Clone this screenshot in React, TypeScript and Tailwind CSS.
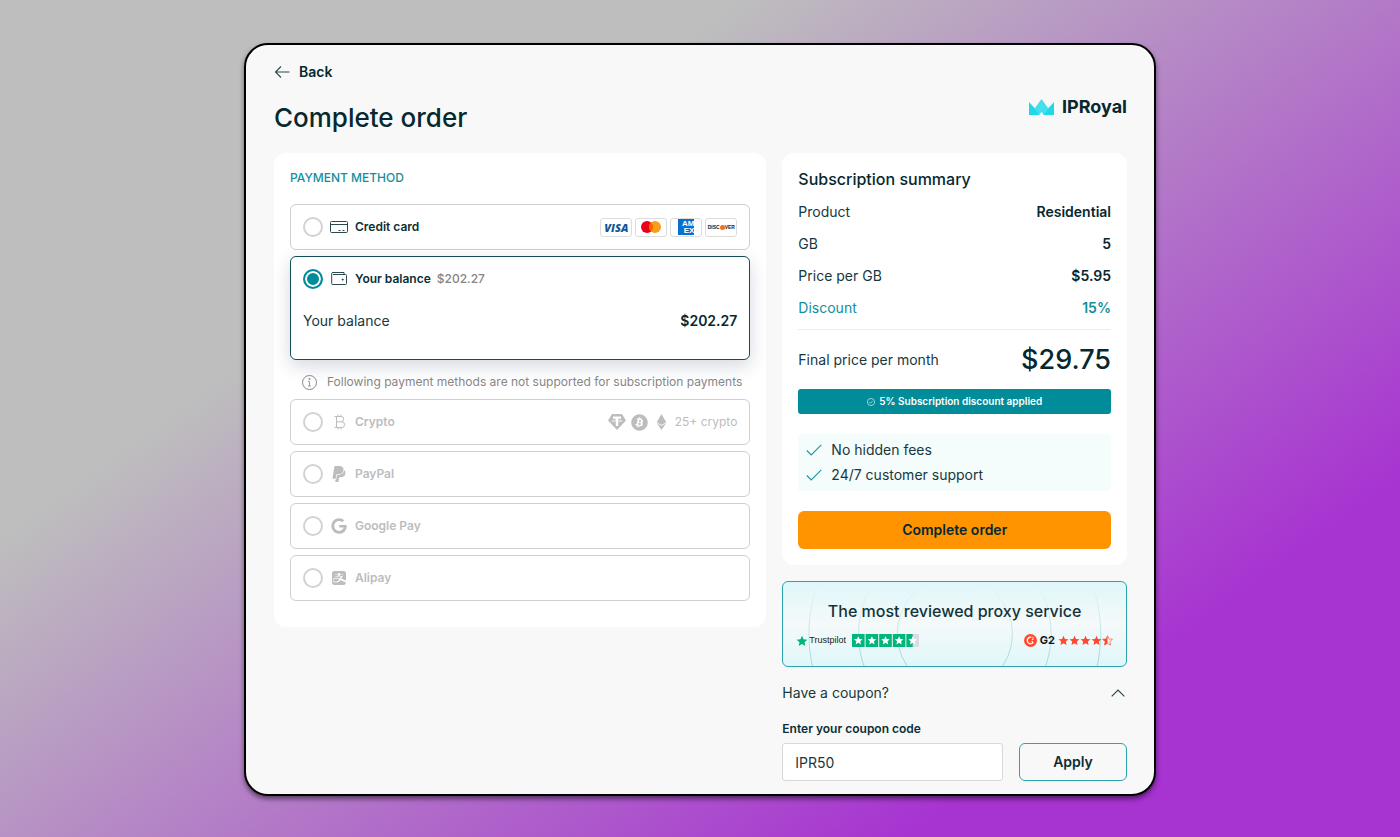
import { useState } from "react";
import { FaAlipay, FaBitcoin, FaEthereum, FaGoogle } from "react-icons/fa";
import { SiPaypal } from "react-icons/si";

const STAR = "M12 1.5l3.1 7.1 7.7.7-5.8 5.1 1.7 7.6L12 18l-6.7 4 1.7-7.6L1.2 9.3l7.7-.7z";

const summary = [
  { label: "Product", value: "Residential" },
  { label: "GB", value: "5" },
  { label: "Price per GB", value: "$5.95" },
  { label: "Discount", value: "15%", accent: true },
];

function Logo() {
  return (
    <div className="flex items-center gap-2">
      <svg className="h-4 w-[25px]" viewBox="0 0 25 16">
        <path d="M0 3L12 16H0z" fill="#22d8e6" />
        <path d="M25 3L13 16H25z" fill="#22d8e6" />
        <path d="M12.5 0L19.2 9.3 14.8 16 12.5 13 10.2 16 5.800 9.300z" fill="#43dfea" />
        <path d="M12.500 13l2.300 3h-4.600z" fill="#f8f8f8" />
      </svg>
      <span className="text-lg leading-5 font-bold text-[#06282e]">IPRoyal</span>
    </div>
  );
}

function CardIcon() {
  return (
    <svg className="h-4 w-4 overflow-visible" viewBox="0 0 16 16" fill="none" stroke="#2c484d">
      <rect x="-.5" y="2.5" width="17" height="11" rx="1" />
      <path d="M0 5.5h16M7.5 11.5h2M11.5 11.5h2" />
    </svg>
  );
}

function WalletIcon() {
  return (
    <svg className="h-4 w-4" viewBox="0 0 16 16" fill="none" stroke="#2c484d">
      <path d="M13 3.5V1.5H2a1.2 1.2 0 0 0-1.3 1.2V12.500a1 1 0 0 0 1 1H14.500a1 1 0 0 0 1-1V4.500a1 1 0 0 0-1-1H2" />
      <circle cx="11.700" cy="8.600" r=".6" fill="#2c484d" />
    </svg>
  );
}

function BitcoinOutline() {
  return (
    <svg className="h-4 w-4" viewBox="0 0 16 16" fill="none" stroke="#bdbdbd">
      <path d="M3.5 2.5H10a2.6 2.6 0 0 1 0 5.3H5.5M10 7.8h.8a2.8 2.8 0 0 1 0 5.7H3.5M5.5 2.5v11M7 .5v2M10 .5v2M7 13.5v2M10 13.5v2" />
    </svg>
  );
}

function TetherIcon() {
  return (
    <svg className="h-4 w-[18px]" viewBox="0 0 18 16">
      <path d="M4 0h10l4 6.5L9 16 0 6.5z" fill="#bdbdbd" />
      <path d="M5 2.5h8v2.2h-2.8v1.1c2.3.1 4 .6 4 1.2s-1.7 1.1-4 1.2V12H7.8V8.2c-2.3-.1-4-.6-4-1.2s1.7-1.1 4-1.2V4.7H5z" fill="#fff" />
      <ellipse cx="9" cy="7" rx="4.4" ry=".7" fill="#bdbdbd" />
      <path d="M7.8 5v3h2.4V5z" fill="#fff" />
    </svg>
  );
}

function Brand({ children }: any) {
  return (
    <span className="flex h-[19px] w-8 items-center justify-center overflow-hidden rounded-[3px] border border-[#dcdcdc] bg-white">
      {children}
    </span>
  );
}

function CardBrands() {
  return (
    <div className="flex gap-[3px]">
      <Brand>
        <span className="font-['Open_Sans'] text-[11px] leading-none font-extrabold text-[#15559a] italic">VISA</span>
      </Brand>
      <Brand>
        <svg className="h-3 w-5" viewBox="0 0 20 12">
          <circle cx="6" cy="6" r="6" fill="#eb001b" />
          <circle cx="14" cy="6" r="6" fill="#f79e1b" />
          <path d="M10 1.5a6 6 0 0 1 0 9 6 6 0 0 1 0-9z" fill="#ff5f00" />
        </svg>
      </Brand>
      <Brand>
        <span className="flex h-4 w-4 flex-col items-end justify-center overflow-hidden bg-[#0a70cf] font-['Liberation_Sans'] text-[8px] leading-[7px] font-bold text-white">
          <span>AM</span>
          <span>EX</span>
        </span>
      </Brand>
      <Brand>
        <span className="flex items-center font-['Liberation_Sans'] text-[5px] leading-none font-bold text-[#222]">
          DISC
          <span className="h-[5px] w-[5px] rounded-full bg-[#f47216]" />
          VER
        </span>
      </Brand>
    </div>
  );
}

function Method({ id, label, icon, selected, onSelect, disabled, note, right, children }: any) {
  return (
    <div
      className={`rounded-md border bg-white px-3 ${
        selected ? "border-[#124d57] shadow-[0_6px_18px_rgba(20,40,80,0.18)]" : "border-[#cfcfcf]"
      }`}
    >
      <div className="flex h-11 items-center gap-2">
        <input
          type="radio"
          id={id}
          name="method"
          checked={selected}
          disabled={disabled}
          onChange={() => onSelect(id)}
          className="h-5 w-5 shrink-0 appearance-none rounded-full border-2 border-[#d2d2d2] bg-white checked:border-[#008c99] checked:bg-[#008c99] checked:shadow-[inset_0_0_0_2px_#fff]"
        />
        <label
          htmlFor={id}
          className={`flex items-center gap-2 text-xs font-semibold ${disabled ? "text-[#bdbdbd]" : "text-[#0b2f35]"}`}
        >
          {icon}
          <span>
            {label}
            {note && <span className="ml-[6px] font-medium text-[#868686]">{note}</span>}
          </span>
        </label>
        <div className="ml-auto">{right}</div>
      </div>
      {children}
    </div>
  );
}

function PaymentMethods() {
  const [method, setMethod] = useState("balance");

  return (
    <section className="self-start rounded-xl bg-white px-4 pt-4 pb-[26px]">
      <h2 className="text-xs leading-[18px] font-medium text-[#138f9c]">PAYMENT METHOD</h2>
      <div className="mt-[17px] flex flex-col gap-[6px]">
        <Method
          id="card"
          label="Credit card"
          icon={<CardIcon />}
          selected={method === "card"}
          onSelect={setMethod}
          right={<CardBrands />}
        />
        <Method
          id="balance"
          label="Your balance"
          icon={<WalletIcon />}
          note="$202.27"
          selected={method === "balance"}
          onSelect={setMethod}
        >
          <div className="flex justify-between pt-[10px] pb-7 text-sm leading-5">
            <span>Your balance</span>
            <span className="font-semibold text-[#06282e]">$202.27</span>
          </div>
        </Method>
      </div>

      <p className="mt-[13px] mb-2 flex items-center gap-[10px] pl-3 text-xs leading-[18px] text-[#868686]">
        <svg className="h-[15px] w-[15px] shrink-0" viewBox="0 0 15 15" fill="none" stroke="#868686">
          <circle cx="7.5" cy="7.5" r="7" />
          <path d="M6 6.5h1.5v4.5M6 11h3M7 3.5h1v1H7z" strokeWidth=".8" />
        </svg>
        <span>Following payment methods are not supported for subscription payments</span>
      </p>

      <div className="flex flex-col gap-[6px]">
        <Method
          id="crypto"
          label="Crypto"
          disabled
          selected={false}
          icon={<BitcoinOutline />}
          right={
            <div className="flex items-center gap-[5px] text-xs text-[#bdbdbd]">
              <TetherIcon />
              <FaBitcoin className="h-[17px] w-[17px]" />
              <FaEthereum className="h-4 w-[17px]" />
              <span>25+ crypto</span>
            </div>
          }
        />
        <Method id="paypal" label="PayPal" disabled selected={false} icon={<SiPaypal className="h-4 w-4" />} />
        <Method id="google" label="Google Pay" disabled selected={false} icon={<FaGoogle className="h-4 w-4" />} />
        <Method id="alipay" label="Alipay" disabled selected={false} icon={<FaAlipay className="h-4 w-4" />} />
      </div>
    </section>
  );
}

function Perk({ text }: any) {
  return (
    <li className="flex items-center gap-[9px]">
      <svg className="h-4 w-4" viewBox="0 0 16 16" fill="none" stroke="#1a98a4" strokeWidth="1.1">
        <path d="M.8 8.5l4.4 4.5L15.3 2.8" />
      </svg>
      <span>{text}</span>
    </li>
  );
}

function Summary() {
  return (
    <section className="rounded-xl bg-white p-4 text-sm">
      <h2 className="text-base leading-5 font-medium text-[#06282e]">Subscription summary</h2>
      <dl className="mt-[13px] flex flex-col gap-3 leading-5">
        {summary.map((row) => (
          <div key={row.label} className={`flex justify-between ${row.accent ? "text-[#138f9c]" : ""}`}>
            <dt>{row.label}</dt>
            <dd className={`font-semibold ${row.accent ? "" : "text-[#06282e]"}`}>{row.value}</dd>
          </div>
        ))}
      </dl>
      <div className="mt-[11px] flex items-center justify-between border-t border-[#ececec] pt-3">
        <span>Final price per month</span>
        <span className="text-[27px] leading-9 font-medium text-[#06282e]">$29.75</span>
      </div>
      <div className="mt-[11px] flex h-[25px] items-center justify-center gap-1 rounded-[3px] bg-[#008c99] text-[10px] font-semibold text-white">
        <svg className="h-2 w-2" viewBox="0 0 8 8" fill="none" stroke="#fff" strokeWidth=".6">
          <circle cx="4" cy="4" r="3.6" />
          <path d="M2.3 4.1l1.2 1.2 2.2-2.4" />
        </svg>
        5% Subscription discount applied
      </div>
      <ul className="mt-5 flex flex-col gap-[5px] rounded-[3px] bg-[#f4fcfc] px-2 py-[6px] leading-5">
        <Perk text="No hidden fees" />
        <Perk text="24/7 customer support" />
      </ul>
      <button className="mt-5 h-[38px] w-full rounded-md bg-[#ff9300] font-semibold text-[#06282e]">
        Complete order
      </button>
    </section>
  );
}

function Reviews() {
  return (
    <section className="relative h-[86px] overflow-hidden rounded-md border border-[#2ba3ae] bg-linear-to-b from-[#dff7fa] via-[#f5f9f9] to-[#dff7fa] px-[13px] pt-[19px]">
      <svg
        className="absolute inset-0 h-full w-full"
        viewBox="0 0 345 86"
        preserveAspectRatio="xMidYMid slice"
        fill="none"
        stroke="url(#arc)"
      >
        <defs>
          <linearGradient id="arc" gradientUnits="userSpaceOnUse" x1="0" y1="0" x2="0" y2="86">
            <stop offset="0" stopColor="#9fd8dd" stopOpacity="0" />
            <stop offset="1" stopColor="#9fd8dd" />
          </linearGradient>
        </defs>
        <circle cx="173" cy="53" r="58" />
        <circle cx="173" cy="53" r="97" />
        <circle cx="173" cy="53" r="147" />
      </svg>
      <h2 className="relative text-center text-base leading-5 font-medium text-[#12343a]">
        The most reviewed proxy service
      </h2>
      <div className="relative mt-[13px] flex items-center justify-between">
        <div className="flex items-center gap-[6px]">
          <span className="flex items-center gap-px font-['Liberation_Sans'] text-[9px] leading-[13px] text-[#191919]">
            <svg className="h-3 w-3" viewBox="0 0 24 24" fill="#00b67a">
              <path d={STAR} />
            </svg>
            Trustpilot
          </span>
          <svg className="h-[13px] w-[67px]" viewBox="0 0 67 13">
            {[0, 1, 2, 3, 4].map((i) => (
              <g key={i} transform={`translate(${i * 13.6} 0)`}>
                <rect width="12.6" height="13" fill={i === 4 ? "#dcdce6" : "#00b67a"} />
                {i === 4 && <rect width="6.3" height="13" fill="#00b67a" />}
                <path d={STAR} transform="translate(1.5 1.6) scale(.4)" fill="#fff" />
              </g>
            ))}
          </svg>
        </div>
        <div className="flex items-center gap-[3px] text-[11px] leading-[13px] font-bold text-[#12181a]">
          <svg className="h-[13px] w-[13px]" viewBox="0 0 13 13" fill="none">
            <circle cx="6.5" cy="6.5" r="6.5" fill="#ff492c" />
            <path d="M7.3 3.3a3.3 3.3 0 1 0 1.6 5.6L7.8 7.2" stroke="#fff" strokeWidth="1.3" />
            <path d="M8 3.6c.3-.8 1.6-.6 1.5.2 0 .7-1.4.8-1.5 1.7h1.7" stroke="#fff" strokeWidth=".7" />
          </svg>
          G2
          <svg className="h-[11px] w-[55px]" viewBox="0 0 55 11" fill="#ff492c">
            {[0, 1, 2, 3].map((i) => (
              <path key={i} d={STAR} transform={`translate(${i * 11} 0) scale(.46)`} />
            ))}
            <g transform="translate(44 0) scale(.46)">
              <path d={STAR} fill="none" stroke="#ff492c" strokeWidth="1.4" />
              <path d="M12 1.5V18l-6.7 4 1.7-7.6L1.2 9.3l7.7-.7z" />
            </g>
          </svg>
        </div>
      </div>
    </section>
  );
}

function Coupon() {
  const [open, setOpen] = useState(true);
  const [code, setCode] = useState("IPR50");

  return (
    <section>
      <button
        onClick={() => setOpen(!open)}
        className="flex w-full items-center justify-between pr-[2px] text-sm leading-5"
      >
        Have a coupon?
        <svg className="h-2 w-[14px]" viewBox="0 0 14 8" fill="none" stroke="#2c484d" strokeWidth="1.2">
          <path d={open ? "M.7 7.3L7 1l6.3 6.3" : "M.7 .7L7 7 13.3 .7"} />
        </svg>
      </button>
      {open && (
        <div className="mt-[18px]">
          <label htmlFor="coupon" className="block text-xs leading-4 font-semibold text-[#0b2f35]">
            Enter your coupon code
          </label>
          <div className="mt-[6px] flex gap-4">
            <input
              id="coupon"
              value={code}
              onChange={(e) => setCode(e.target.value)}
              className="h-[38px] min-w-0 flex-1 rounded-[3px] border border-[#d8d8d8] bg-white px-3 text-sm"
            />
            <button className="h-[38px] w-[108px] rounded-md border border-[#2ba3ae] text-sm font-semibold text-[#0b2f35]">
              Apply
            </button>
          </div>
        </div>
      )}
    </section>
  );
}

export default function App() {
  return (
    <div className="min-h-screen bg-[linear-gradient(144deg,#bebebe_29%,#a733d1_81%)] px-4 pt-[43px] pb-[42px] font-[Inter,sans-serif] text-[#17383d]">
      <main className="mx-auto w-full max-w-[912px] rounded-3xl border-2 border-black bg-[#f8f8f8] pt-[17px] pr-[27px] pb-[13px] pl-7 shadow-[0_3px_5px_rgba(0,0,0,0.5)]">
        <header className="mb-[18px] flex items-center justify-between">
          <div>
            <a href="#" className="flex items-center gap-[9px] text-sm leading-5 font-semibold text-[#06282e]">
              <svg className="h-4 w-4" viewBox="0 0 16 16" fill="none" stroke="#2c484d" strokeWidth="1.1">
                <path d="M15.5 8H1.5M7 2.5L1.5 8 7 13.5" />
              </svg>
              Back
            </a>
            <h1 className="mt-[19px] text-[26px] leading-[34px] font-medium text-[#06282e]">Complete order</h1>
          </div>
          <div className="pt-4">
            <Logo />
          </div>
        </header>

        <div className="grid gap-4 md:grid-cols-[minmax(0,10fr)_minmax(0,7fr)]">
          <PaymentMethods />
          <div className="flex flex-col gap-4">
            <Summary />
            <Reviews />
            <Coupon />
          </div>
        </div>
      </main>
    </div>
  );
}
